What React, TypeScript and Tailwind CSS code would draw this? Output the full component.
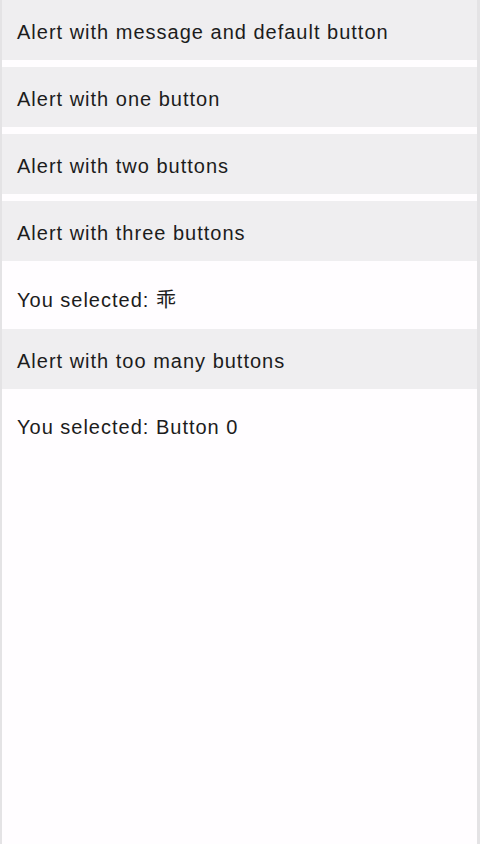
const items = [
    "Alert with message and default button",
    "Alert with one button",
    "Alert with two buttons",
    "Alert with three buttons",
];

const Row = ({ label }: { label: string }) => (
    <div className="h-[60px] bg-[#efeef0] flex items-center px-[15px] pt-[4px] text-[20px] tracking-[1px] text-[#1c1c1c]">
        {label}
    </div>
);

export default function App() {
    return (
        <div
            className="w-[480px] h-[844px] bg-[#fffdff] border-l-2 border-r-[3px] border-[#e4e3e5] flex flex-col"
            style={{ fontFamily: '"Liberation Sans", "Noto Sans CJK SC", sans-serif' }}
        >
            <div className="flex flex-col gap-[7px]">
                {items.map((label, key) => <Row key={key} label={label} />)}
            </div>
            <div className="h-[68px] flex items-center px-[15px] pt-[10px] text-[20px] tracking-[1px] text-[#1c1c1c]">
                You selected: 乖
            </div>
            <Row label="Alert with too many buttons" />
            <div className="h-[76px] flex items-center px-[15px] text-[20px] tracking-[1px] text-[#1c1c1c]">
                You selected: Button 0
            </div>
        </div>
    );
}
